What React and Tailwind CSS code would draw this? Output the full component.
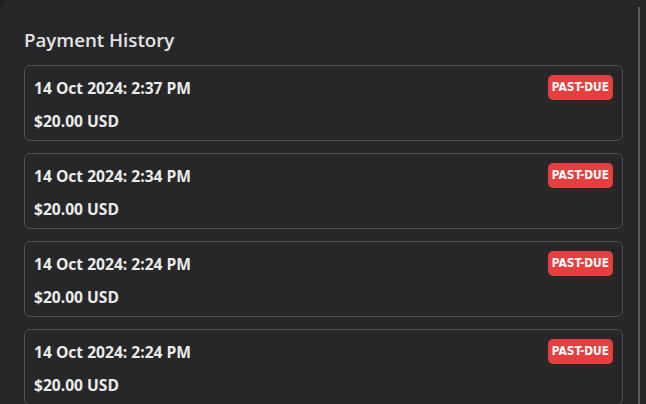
export default function App() {
  const items = [
    "14 Oct 2024: 2:37 PM",
    "14 Oct 2024: 2:34 PM",
    "14 Oct 2024: 2:24 PM",
    "14 Oct 2024: 2:24 PM",
  ];
  return (
    <div className="w-[646px] h-[404px] overflow-hidden bg-[#1f1f21] font-['Open_Sans',sans-serif]">
      <div className="h-full bg-[#272729] rounded-tl-xl flex">
        <div className="flex-1 pl-6 pr-[15px] pt-[27px]">
          <h2 className="text-[18.7px] leading-[26px] font-semibold text-[#e4e4e4] mb-[12px]">
            Payment History
          </h2>
          <div className="flex flex-col gap-3">
            {items.map((d, i) => (
              <div
                key={i}
                className="h-[76px] border border-[#505052] rounded-md px-[9px] pt-[8px]"
              >
                <div className="flex items-center justify-between h-[26px]">
                  <span className="text-[15.6px] leading-[20px] pt-[1px] font-bold text-[#ececec]">{d}</span>
                  <span className="h-[25px] px-[4px] pt-[2px] flex items-center rounded-[5px] bg-[#e53e3e] text-white text-[11.8px] font-bold font-['DejaVu_Sans_Condensed',sans-serif]">
                    PAST-DUE
                  </span>
                </div>
                <div className="mt-[11px] text-[15.6px] leading-[20px] font-bold text-[#ececec]">
                  $20.00 USD
                </div>
              </div>
            ))}
          </div>
        </div>
        <div className="w-[8px] pt-[7px]">
          <div className="w-[2px] h-full bg-[#5a5a5c]" />
        </div>
      </div>
    </div>
  );
}
